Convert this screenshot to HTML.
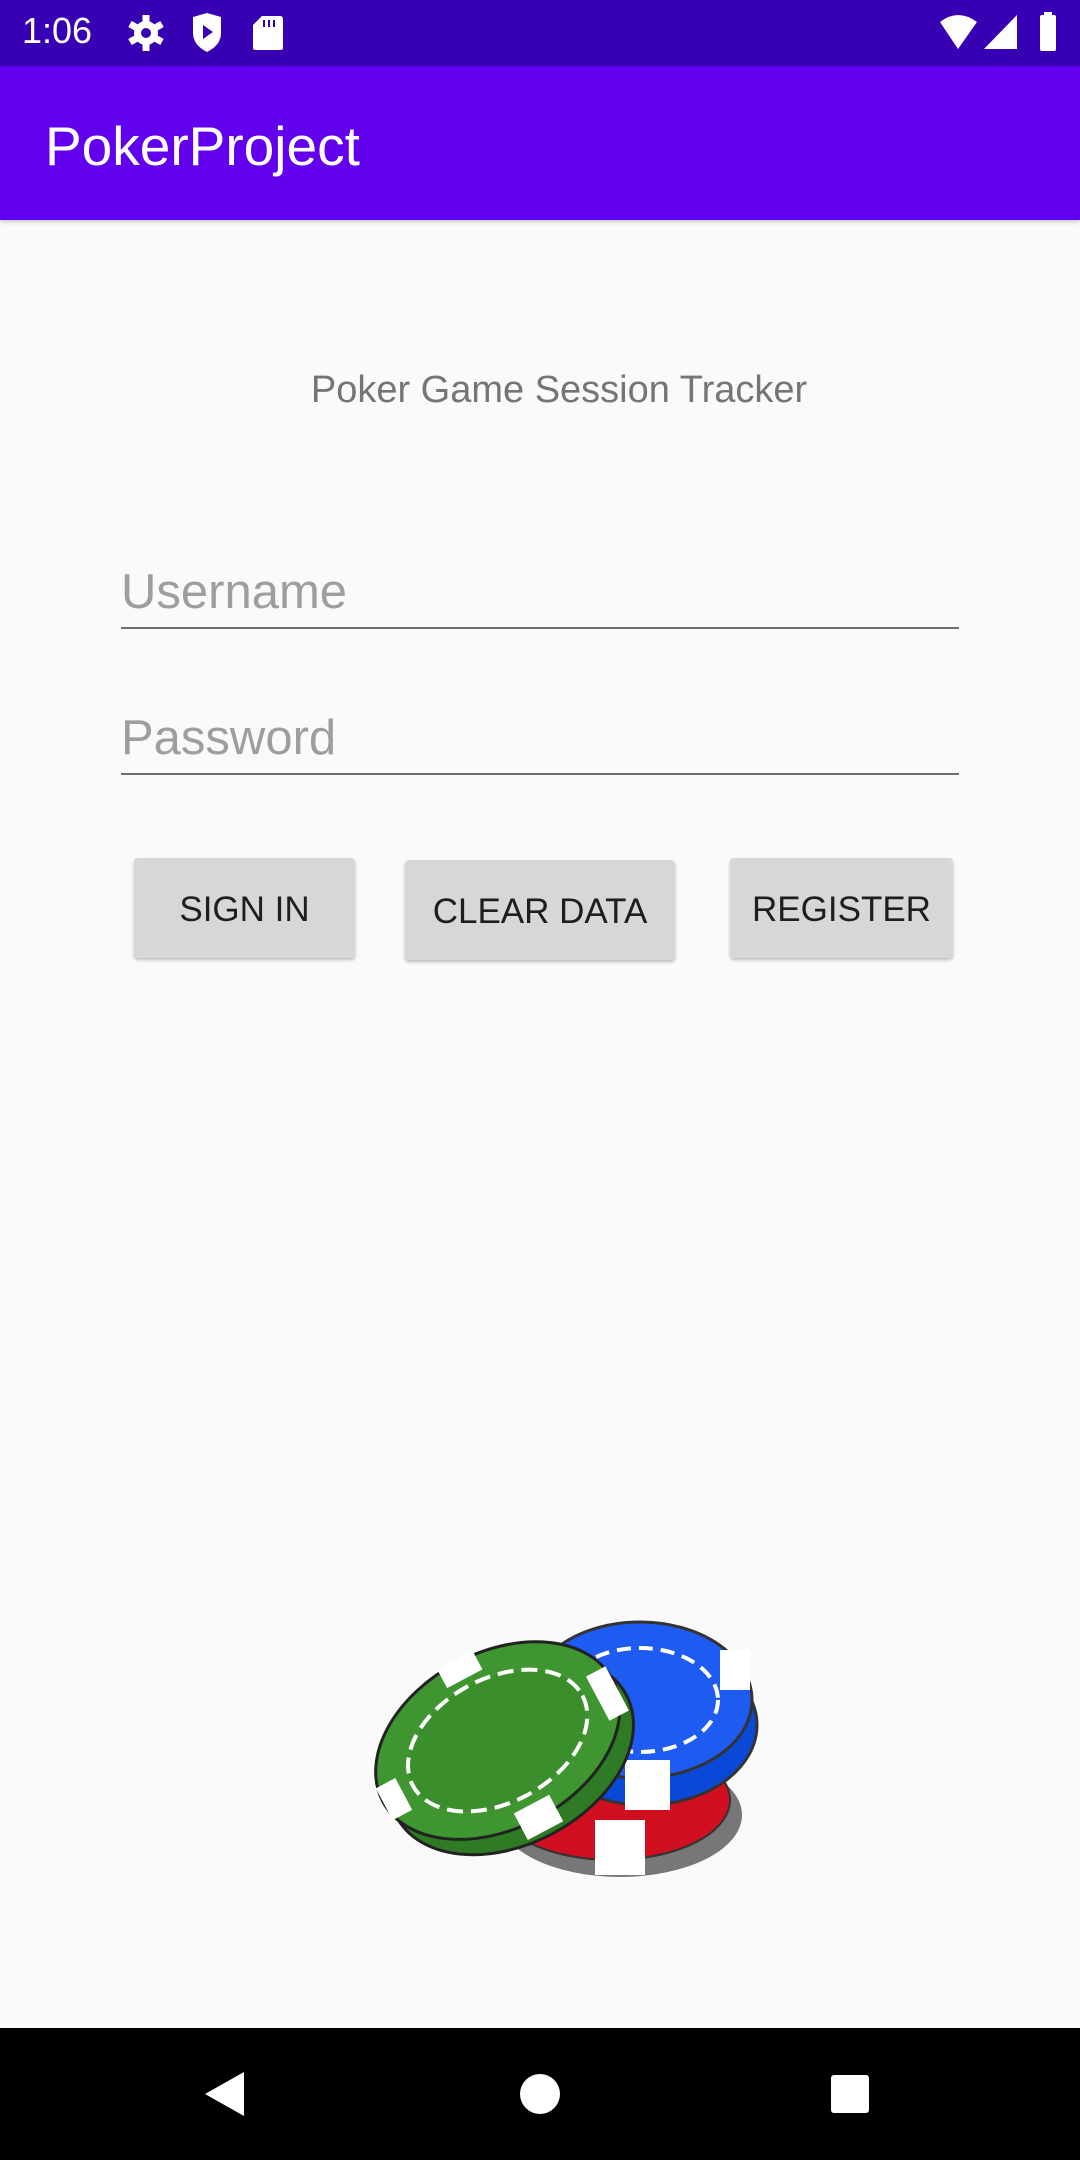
<!DOCTYPE html>
<html><head><meta charset="utf-8"><style>
*{margin:0;padding:0;box-sizing:border-box}
body{width:1080px;height:2160px;background:#FAFAFA;font-family:"Liberation Sans",sans-serif;position:relative;overflow:hidden}
.abs{position:absolute}
.btn{position:absolute;background:#D6D7D7;border-radius:4px;box-shadow:0 2px 3px rgba(0,0,0,.25);font-size:35px;color:#1e1e1e;display:flex;align-items:center;justify-content:center;letter-spacing:0px;padding-top:4px}
</style></head><body>
<div class="abs" style="left:0;top:0;width:1080px;height:66px;background:#3700B3"></div>
<div class="abs" style="left:22px;top:10px;color:#fff;font-size:36px">1:06</div>
<svg class="abs" style="left:0;top:0" width="1080" height="66">
<g fill="#fff">
<circle cx="146" cy="33" r="12"/>
<g stroke="#fff" stroke-width="7"><line x1="146" y1="15" x2="146" y2="51"/><line x1="130" y1="24" x2="162" y2="42"/><line x1="130" y1="42" x2="162" y2="24"/></g>
<circle cx="146" cy="33" r="5" fill="#3700B3"/>
<path d="M193 17 L207 13 L221 17 L221 33 Q221 45 207 52 Q193 45 193 33Z"/>
<path d="M203 25 L213 32 L203 39Z" fill="#3700B3"/>
<path d="M262 16 L280 16 Q283 16 283 19 L283 48 Q283 50 280 50 L256 50 Q253 50 253 48 L253 25Z"/>
<rect x="263" y="20" width="2" height="7" fill="#3700B3"/><rect x="268" y="20" width="2" height="7" fill="#3700B3"/><rect x="273" y="20" width="2" height="7" fill="#3700B3"/>
<path d="M940 22 Q958 8 977 22 L958 49Z"/>
<path d="M984 49 L1017 15 L1017 49Z"/>
<rect x="1040" y="15" width="16" height="36" rx="2"/><rect x="1044" y="12" width="8" height="4"/>
</g></svg>
<div class="abs" style="left:0;top:66px;width:1080px;height:154px;background:#6200EE;box-shadow:0 2px 4px rgba(0,0,0,.2)"></div>
<div class="abs" style="left:45px;top:114px;color:#fff;font-size:55px;line-height:64px">PokerProject</div>
<div class="abs" style="left:0;width:1118px;top:369px;text-align:center;font-size:38px;color:#757575">Poker Game Session Tracker</div>
<div class="abs" style="left:121px;top:564px;font-size:49px;color:#9E9E9E">Username</div>
<div class="abs" style="left:121px;top:627px;width:838px;height:2px;background:#6e6e6e"></div>
<div class="abs" style="left:121px;top:710px;font-size:49px;color:#9E9E9E">Password</div>
<div class="abs" style="left:121px;top:773px;width:838px;height:2px;background:#6e6e6e"></div>
<div class="btn" style="left:134px;top:858px;width:221px;height:100px">SIGN IN</div>
<div class="btn" style="left:405px;top:860px;width:270px;height:100px">CLEAR DATA</div>
<div class="btn" style="left:730px;top:858px;width:223px;height:100px">REGISTER</div>
<svg class="abs" style="left:0;top:0" width="1080" height="2160">
<ellipse cx="620" cy="1815" rx="122" ry="62" fill="#777"/>
<ellipse cx="612" cy="1800" rx="118" ry="60" fill="#D01020" stroke="#333" stroke-width="2"/>
<rect x="595" y="1820" width="50" height="55" fill="#fff"/>
<ellipse cx="645" cy="1725" rx="112" ry="80" fill="#0A48D8" stroke="#333" stroke-width="3"/>
<ellipse cx="640" cy="1700" rx="112" ry="78" fill="#1E5BF0" stroke="#333" stroke-width="3"/>
<ellipse cx="640" cy="1700" rx="78" ry="52" fill="none" stroke="#fff" stroke-width="4" stroke-dasharray="14 8"/>
<rect x="625" y="1760" width="45" height="50" fill="#fff"/>
<rect x="720" y="1650" width="30" height="40" fill="#fff"/>
<g transform="rotate(-28 500 1745)">
<ellipse cx="505" cy="1760" rx="130" ry="88" fill="#2F7A25" stroke="#222" stroke-width="3"/>
<ellipse cx="500" cy="1740" rx="130" ry="88" fill="#3F9530" stroke="#222" stroke-width="3"/>
<ellipse cx="500" cy="1740" rx="96" ry="62" fill="#3B8E2C" stroke="#fff" stroke-width="4" stroke-dasharray="16 8"/>
<rect x="480" y="1650" width="40" height="20" fill="#fff"/>
<rect x="480" y="1812" width="40" height="30" fill="#fff"/>
<rect x="370" y="1725" width="22" height="36" fill="#fff"/>
<rect x="608" y="1725" width="22" height="50" fill="#fff"/>
</g>
</svg>
<div class="abs" style="left:0;top:2028px;width:1080px;height:132px;background:#000"></div>
<svg class="abs" style="left:0;top:2028px" width="1080" height="132">
<path d="M205 66 L244 44 L244 88Z" fill="#fff"/>
<circle cx="540" cy="66" r="20" fill="#fff"/>
<rect x="831" y="47" width="38" height="38" rx="3" fill="#fff"/>
</svg>
</body></html>
